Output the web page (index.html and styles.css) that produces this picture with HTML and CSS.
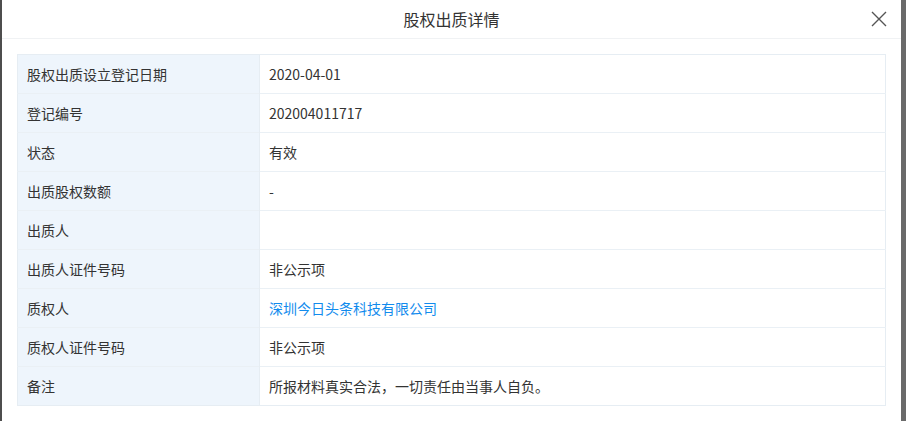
FILE: index.html
```html
<!DOCTYPE html>
<html lang="zh">
<head>
<meta charset="utf-8">
<link rel="stylesheet" href="styles.css">
</head>
<body>
<div class="page">
  <div class="modal">
    <div class="modal-header">
      <span class="modal-title">股权出质详情</span>
      <span class="close" aria-label="close">
        <svg width="16" height="16" viewBox="0 0 16 16"><path d="M1 1L15 15M15 1L1 15" stroke="#555" stroke-width="1.4" fill="none"/></svg>
      </span>
    </div>
    <div class="modal-body">
      <table class="detail">
        <tr><td class="lbl">股权出质设立登记日期</td><td class="val">2020-04-01</td></tr>
        <tr><td class="lbl">登记编号</td><td class="val">202004011717</td></tr>
        <tr><td class="lbl">状态</td><td class="val">有效</td></tr>
        <tr><td class="lbl">出质股权数额</td><td class="val">-</td></tr>
        <tr><td class="lbl">出质人</td><td class="val"></td></tr>
        <tr><td class="lbl">出质人证件号码</td><td class="val">非公示项</td></tr>
        <tr><td class="lbl">质权人</td><td class="val"><a class="link" href="#">深圳今日头条科技有限公司</a></td></tr>
        <tr><td class="lbl">质权人证件号码</td><td class="val">非公示项</td></tr>
        <tr><td class="lbl">备注</td><td class="val">所报材料真实合法，一切责任由当事人自负。</td></tr>
      </table>
    </div>
  </div>
</div>
</body>
</html>
```

FILE: styles.css
```css
html, body {
  margin: 0;
  padding: 0;
  height: 100%;
}
body {
  background: #6a6a6a;
  font-family: "Noto Sans CJK SC", "Noto Sans", sans-serif;
  color: #333;
  overflow: hidden;
}
.page {
  display: flex;
  height: 421px;
  border-left: 2px solid #4e4e4e;
}
.modal {
  width: 899px;
  height: 421px;
  background: #fff;
  display: flex;
  flex-direction: column;
}
.modal-header {
  height: 38px;
  border-bottom: 1px solid #f0f2f4;
  display: flex;
  align-items: center;
  justify-content: center;
  position: relative;
}
.modal-title {
  font-size: 16px;
  color: #333;
  line-height: 38px;
}
.close {
  position: absolute;
  right: 14px;
  top: 11px;
  width: 16px;
  height: 16px;
  display: flex;
}
.modal-body {
  padding: 15px 15px 0 15px;
}
.detail {
  width: 100%;
  border-collapse: collapse;
  font-size: 14px;
  border: 1px solid #e6edf3;
}
.detail td {
  height: 38px;
  padding: 0 9px;
  border-top: 1px solid #eaf0f5;
  vertical-align: middle;
  line-height: 20px;
}
.detail tr:first-child td {
  border-top: none;
}
.lbl {
  width: 223px;
  background: #eef5fc;
  border-right: 1px solid #e6edf3;
}
.link {
  color: #128bed;
  text-decoration: none;
}
```
